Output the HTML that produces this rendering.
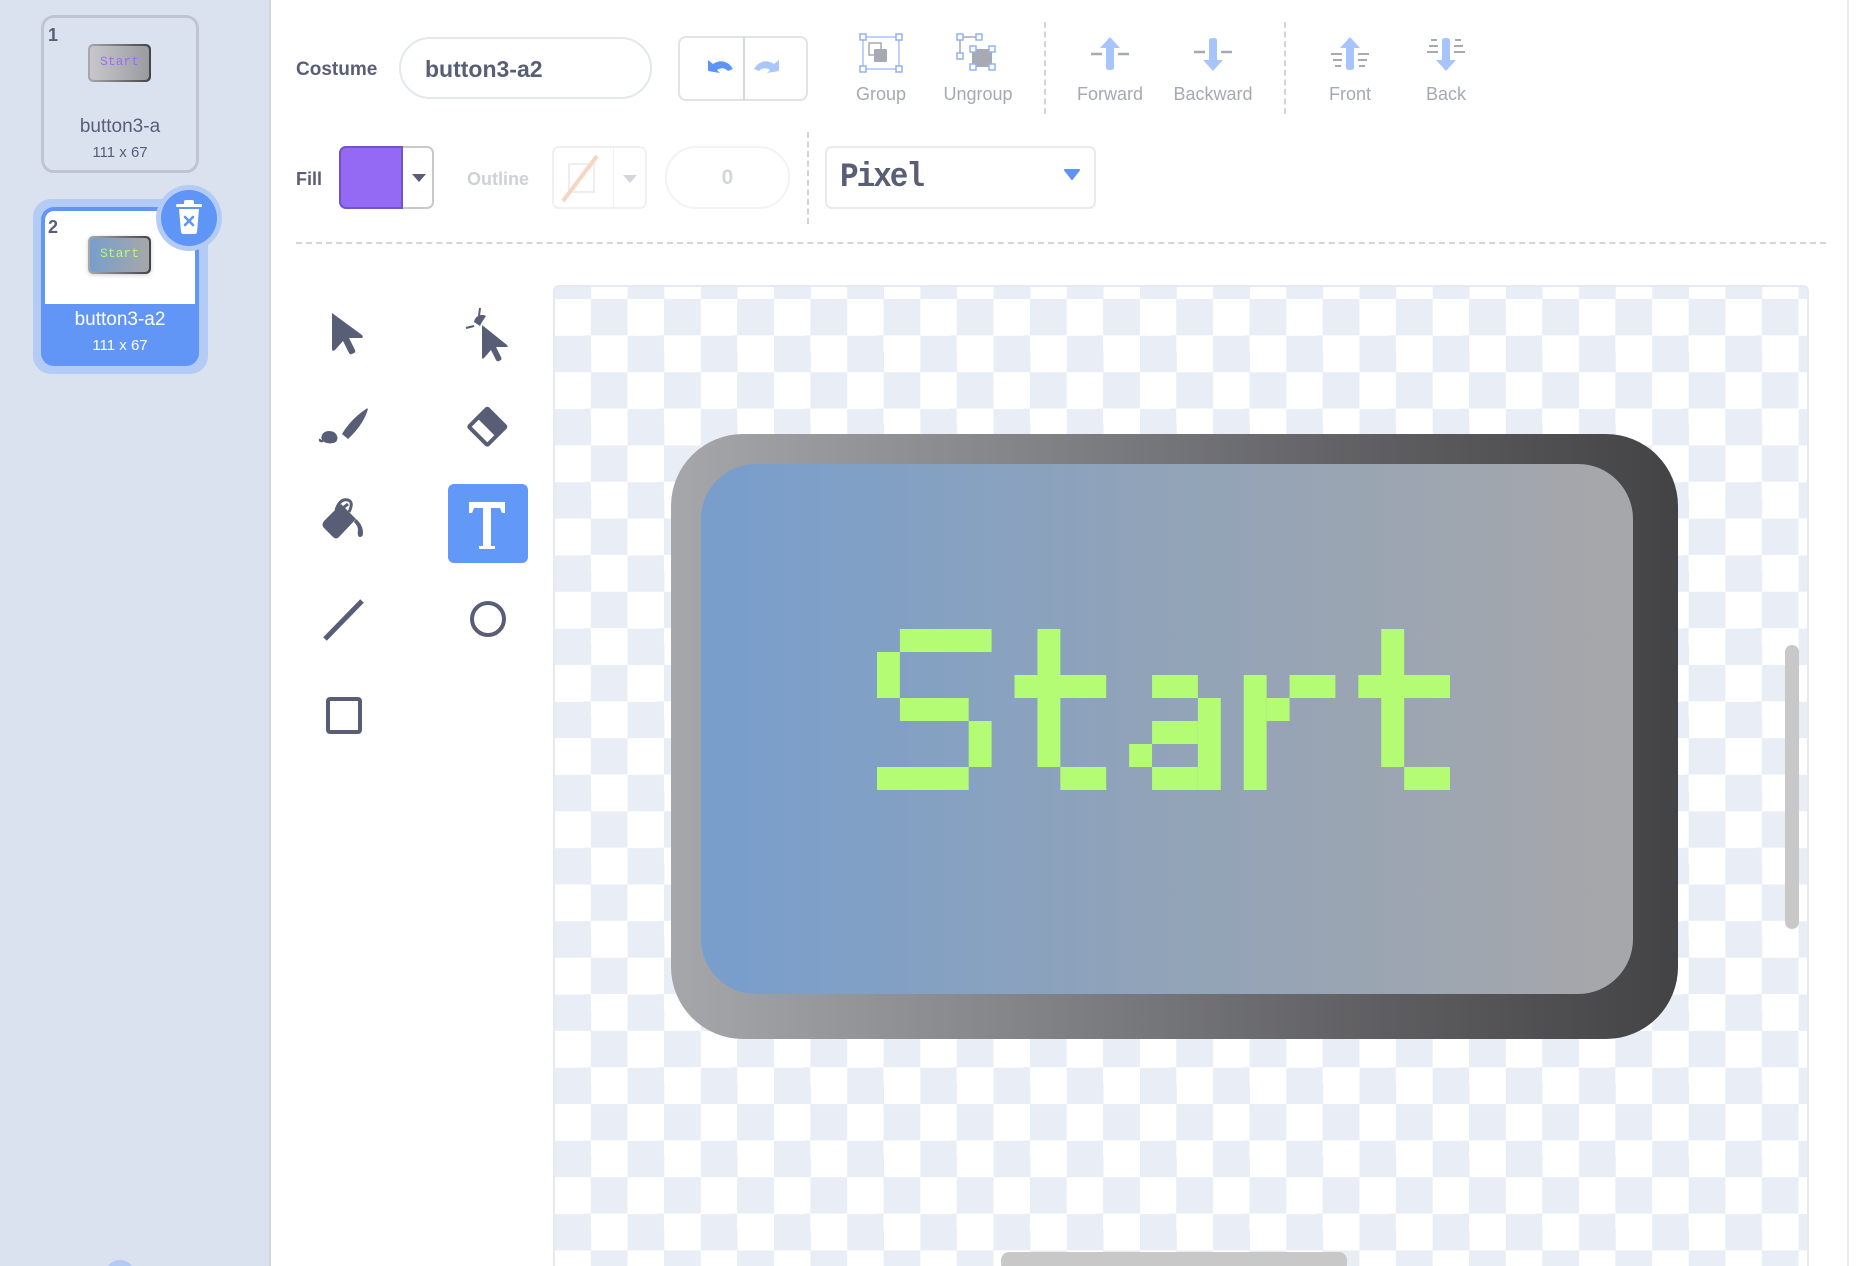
<!DOCTYPE html>
<html><head><meta charset="utf-8">
<style>
*{margin:0;padding:0;box-sizing:border-box}
html,body{width:1856px;height:1266px;overflow:hidden}
body{background:#fff;font-family:"Liberation Sans",Arial,sans-serif;color:#575e75}
#w{position:relative;width:1856px;height:1266px;overflow:hidden}
.a{position:absolute}
.side{left:0;top:0;width:271px;height:1266px;background:#dbe2ef;border-right:2px solid #cfd6e2}
.card{border-radius:13px}
.lbl{font-size:18px;color:#a6a9b3;text-align:center;width:120px}
.dash{border-left:2px dashed #d0d3da}
.canvas{left:553px;top:285px;width:1256px;height:990px;border:2px solid #e6eaf0;border-radius:6px;
background-color:#fff;background-image:repeating-conic-gradient(#e9eef6 0 25%,#fff 0 50%);background-size:73.2px 73.2px;background-position:-0.6px 12px}
</style></head><body><div id="w">
<div class="a side"></div>
<!-- card 1 -->
<div class="a card" style="left:41px;top:15px;width:158px;height:158px;border:3px solid #bfc5d0;background:#dbe2ef"></div>
<div class="a" style="left:48px;top:25px;font-size:18px;font-weight:bold;color:#575e75">1</div>
<div class="a" style="left:88px;top:44px;width:63px;height:38px;border-radius:5px;background:linear-gradient(90deg,#a8a9ad,#444447);padding:2px"><div style="width:100%;height:100%;border-radius:4px;background:linear-gradient(90deg,#c8c8cc,#9a9ba0);font-family:'Liberation Mono',monospace;font-size:13px;color:#9a6cf7;text-align:center;line-height:31px">Start</div></div>
<div class="a" style="left:41px;top:116px;width:158px;text-align:center;font-size:19px;color:#575e75">button3-a</div>
<div class="a" style="left:41px;top:144px;width:158px;text-align:center;font-size:15px;color:#575e75">111 x 67</div>
<!-- card 2 -->
<div class="a" style="left:33px;top:199px;width:175px;height:175px;border-radius:18px;background:#b3cbf5"></div>
<div class="a card" style="left:41px;top:207px;width:158px;height:159px;background:#6196f7;overflow:hidden"><div style="height:93px;background:#fff;margin:4px 4px 0 4px;border-radius:9px 9px 0 0"></div></div>
<div class="a" style="left:48px;top:217px;font-size:18px;font-weight:bold;color:#575e75">2</div>
<div class="a" style="left:88px;top:236px;width:63px;height:38px;border-radius:5px;background:linear-gradient(90deg,#a8a9ad,#444447);padding:2px;box-shadow:0 1px 4px rgba(0,0,0,.2)"><div style="width:100%;height:100%;border-radius:4px;background:linear-gradient(90deg,#789ecd,#a7a7aa);font-family:'Liberation Mono',monospace;font-size:13px;color:#b3fc74;text-align:center;line-height:31px">Start</div></div>
<div class="a" style="left:41px;top:309px;width:158px;text-align:center;font-size:19px;color:#fff">button3-a2</div>
<div class="a" style="left:41px;top:337px;width:158px;text-align:center;font-size:15px;color:#fff">111 x 67</div>
<div class="a" style="left:156px;top:185px;width:66px;height:66px;border-radius:50%;background:#b3cbf5"></div>
<div class="a" style="left:161px;top:190px;width:56px;height:56px;border-radius:50%;background:#5f95f7"></div>
<svg class="a" style="left:170px;top:198px" width="38" height="40" viewBox="0 0 38 40"><rect x="6" y="6" width="26" height="3" rx="1.5" fill="#fff"/><rect x="14" y="2" width="10" height="5" rx="2" fill="#fff"/><path d="M9 11h20l-2 23q-.3 2-2.3 2H13.3q-2 0-2.3-2z" fill="#fff"/><path d="M15 19l8 8M23 19l-8 8" stroke="#5f95f7" stroke-width="2.6" stroke-linecap="round"/></svg>
<div class="a" style="left:105px;top:1260px;width:30px;height:30px;border-radius:50%;background:#b3cbf5"></div>

<!-- toolbar row 1 -->
<div class="a" style="left:296px;top:59px;font-size:19px;font-weight:bold">Costume</div>
<div class="a" style="left:399px;top:37px;width:253px;height:62px;border:2px solid #e3e7ee;border-radius:31px;font-size:23px;font-weight:bold;padding:17px 0 0 24px">button3-a2</div>
<div class="a" style="left:678px;top:36px;width:130px;height:65px;border:2px solid #e0e3e8;border-radius:8px"></div>
<div class="a" style="left:743px;top:37px;width:2px;height:63px;background:#d5d8dd"></div>
<svg class="a" style="left:678px;top:36px" width="130" height="65"><path d="M30 35V24l5 4q9-6 17 1l3 4-5 2q-5-5-11-1l3 3z" fill="#5e94f6"/><path d="M101 35V24l-5 4q-9-6-17 1l-3 4 5 2q5-5 11-1l-3 3z" fill="#aac7fa"/></svg>
<!-- group icon -->
<svg class="a" style="left:859px;top:33px" width="44" height="42"><rect x="4" y="4" width="36" height="32" fill="none" stroke="#a8c4f8" stroke-width="1.5"/><rect x="10" y="10" width="12" height="12" fill="none" stroke="#a7a9b3" stroke-width="1.5"/><rect x="15" y="16" width="13" height="13" rx="1" fill="#a7a9b3"/><g fill="#fff" stroke="#8fb2f7" stroke-width="1.5"><rect x="1" y="1" width="6" height="6"/><rect x="37" y="1" width="6" height="6"/><rect x="1" y="33" width="6" height="6"/><rect x="37" y="33" width="6" height="6"/></g></svg>
<div class="a lbl" style="left:821px;top:84px">Group</div>
<svg class="a" style="left:956px;top:33px" width="44" height="42"><path d="M5 4h18M4 5v18" stroke="#a7a9b3" stroke-width="1.5"/><rect x="16" y="16" width="20" height="18" fill="#a7a9b3"/><g fill="#fff" stroke="#8fb2f7" stroke-width="1.5"><rect x="1" y="1" width="6" height="6"/><rect x="20" y="1" width="6" height="6"/><rect x="1" y="20" width="6" height="6"/><rect x="14" y="13" width="6" height="6"/><rect x="33" y="13" width="6" height="6"/><rect x="14" y="31" width="6" height="6"/><rect x="33" y="31" width="6" height="6"/></g></svg>
<div class="a lbl" style="left:918px;top:84px">Ungroup</div>
<div class="a dash" style="left:1044px;top:22px;height:92px"></div>
<svg class="a" style="left:1088px;top:35px" width="44" height="38"><path d="M3 19h11M30 19h11" stroke="#a7a9b3" stroke-width="2.5"/><path d="M22 2l-10 11h6v20q0 2 4 2t4-2V13h6z" fill="#a8c5fb"/></svg>
<div class="a lbl" style="left:1050px;top:84px">Forward</div>
<svg class="a" style="left:1191px;top:35px" width="44" height="38"><path d="M3 17h11M30 17h11" stroke="#a7a9b3" stroke-width="2.5"/><path d="M22 36l-10-11h6V5q0-2 4-2t4 2v20h6z" fill="#a8c5fb"/></svg>
<div class="a lbl" style="left:1153px;top:84px">Backward</div>
<div class="a dash" style="left:1284px;top:22px;height:92px"></div>
<svg class="a" style="left:1328px;top:35px" width="44" height="38"><path d="M3 19h11M30 19h11M5 25h9M30 25h9M7 31h6M31 31h6" stroke="#a7a9b3" stroke-width="2"/><path d="M22 2l-10 11h6v20q0 2 4 2t4-2V13h6z" fill="#a8c5fb"/></svg>
<div class="a lbl" style="left:1290px;top:84px">Front</div>
<svg class="a" style="left:1424px;top:35px" width="44" height="38"><path d="M7 5h6M31 5h6M5 11h9M30 11h9M3 17h11M30 17h11" stroke="#a7a9b3" stroke-width="2"/><path d="M22 36l-10-11h6V5q0-2 4-2t4 2v20h6z" fill="#a8c5fb"/></svg>
<div class="a lbl" style="left:1386px;top:84px">Back</div>

<!-- row 2 -->
<div class="a" style="left:296px;top:169px;font-size:18px;font-weight:bold">Fill</div>
<div class="a" style="left:339px;top:146px;width:95px;height:63px;border:2px solid #c8c9cc;border-radius:7px;background:#fff"></div>
<div class="a" style="left:339px;top:146px;width:64px;height:63px;border:2px solid #7452c9;border-radius:7px 0 0 7px;background:#9469f4"></div>
<div class="a" style="left:412px;top:174px;width:0;height:0;border-left:7px solid transparent;border-right:7px solid transparent;border-top:8px solid #575e75"></div>
<div class="a" style="left:467px;top:169px;font-size:18px;font-weight:bold;color:#cfd1d6">Outline</div>
<div class="a" style="left:552px;top:146px;width:95px;height:63px;border:2px solid #eef0f3;border-radius:7px"></div>
<div class="a" style="left:613px;top:147px;width:1px;height:61px;background:#eef0f3"></div>
<svg class="a" style="left:552px;top:146px" width="62" height="63"><rect x="17" y="18" width="25" height="28" fill="none" stroke="#e8e9ec" stroke-width="1.5"/><path d="M11 55L45 10" stroke="#f8d5c2" stroke-width="4"/></svg>
<div class="a" style="left:623px;top:175px;width:0;height:0;border-left:7px solid transparent;border-right:7px solid transparent;border-top:8px solid #d4d6db"></div>
<div class="a" style="left:665px;top:146px;width:125px;height:63px;border:2px solid #f2f3f5;border-radius:31px;text-align:center;font-size:21px;font-weight:bold;color:#d4d6db;padding-top:18px">0</div>
<div class="a dash" style="left:807px;top:132px;height:92px"></div>
<div class="a" style="left:825px;top:146px;width:271px;height:63px;border:2px solid #e7eaef;border-radius:7px"></div>
<div class="a" style="left:840px;top:160px;font-family:'Liberation Mono',monospace;font-size:31px;font-weight:bold;color:#575e75;letter-spacing:-2px;transform:scaleY(1.1)">Pixel</div>
<svg class="a" style="left:1064px;top:169px" width="16" height="12"><path d="M1 1h14l-7 9z" fill="#5e94f6" stroke="#5e94f6" stroke-linejoin="round" stroke-width="2"/></svg>
<div class="a" style="left:296px;top:242px;width:1530px;border-top:2px dashed #d3d5da"></div>

<!-- tools -->
<svg class="a" style="left:300px;top:290px" width="240" height="470">
<g fill="#575e75">
<path d="M32 23v36q0 3 3 1l8-9 6 12q1 2 3 1l2-1q2-1 1-3l-6-12h12q3 0 1-3z"/>
<path d="M182 35v32q0 3 2 1l7-8 5 10q1 2 3 1l2-1q1-1 0-3l-5-10h10q3 0 1-2z"/>
<path d="M174 32a8 8 0 0 1 12-6l-4 6-2 4z"/>
<path d="M180 18l-1 8M166 38l8-2" stroke="#575e75" stroke-width="2"/>
<path d="M66 119q3-2 1 3q-5 14-19 27l-6-5q9-15 24-25z"/>
<path d="M24 152q-4-3-2-7q2-4 7-4q5 0 7 3q3 4 0 8q-6 3-12 0z"/>
<path d="M23 151q-4 1-3-2" stroke="#575e75" stroke-width="2"/>
<g transform="rotate(45 188 136)"><rect x="173" y="122" width="30" height="30" rx="3"/><rect x="177" y="138" width="22" height="10" fill="#fff"/></g>
<path d="M24 231l17-17 15 15-17 18q-3 3-6 0l-9-9q-3-3 0-7z"/>
<path d="M36 220q4-12 12-10q6 2 1 12M30 228l18-14" fill="none" stroke="#575e75" stroke-width="3"/>
<path d="M56 229q7 6 7 14q0 4-3 4q-3 0-2-7q0-4-4-8z"/>
</g>
<rect x="148" y="194" width="80" height="79" rx="6" fill="#6298f8"/>
<path d="M169 212h36v11h-3l-2-5h-9v38h4v3h-16v-3h4v-38h-9l-2 5h-3z" fill="#fff"/>
<path d="M25 349l37-38" stroke="#575e75" stroke-width="5"/>
<circle cx="188" cy="329" r="16" fill="none" stroke="#575e75" stroke-width="4"/>
<rect x="28" y="409" width="32" height="33" rx="2" fill="none" stroke="#575e75" stroke-width="4"/>
</svg>

<!-- canvas -->
<div class="a canvas"></div>
<div class="a" style="left:671px;top:434px;width:1007px;height:605px;border-radius:72px;background:linear-gradient(90deg,#a6a7ab,#88898d 30%,#5f5f62 70%,#434345)"></div>
<div class="a" style="left:701px;top:464px;width:932px;height:530px;border-radius:55px;background:linear-gradient(90deg,#789ecd,#8fa3ba 45%,#a7a7aa)"></div>
<svg class="a" style="left:877px;top:628.7px" width="573" height="161" viewBox="0 0 25 7" preserveAspectRatio="none" fill="#b3fc74">
<rect x="1" y="0" width="4" height="1"/><rect x="0" y="1" width="1" height="2"/><rect x="1" y="3" width="3" height="1"/><rect x="4" y="4" width="1" height="2"/><rect x="0" y="6" width="4" height="1"/>
<rect x="7" y="0" width="1" height="6"/><rect x="6" y="2" width="4" height="1"/><rect x="8" y="6" width="2" height="1"/>
<rect x="12" y="2" width="2" height="1"/><rect x="14" y="3" width="1" height="4"/><rect x="12" y="4" width="2" height="1"/><rect x="11" y="5" width="1" height="1"/><rect x="12" y="6" width="2" height="1"/>
<rect x="16" y="2" width="1" height="5"/><rect x="17" y="3" width="1" height="1"/><rect x="18" y="2" width="2" height="1"/>
<rect x="22" y="0" width="1" height="6"/><rect x="21" y="2" width="4" height="1"/><rect x="23" y="6" width="2" height="1"/>
</svg>
<div class="a" style="left:1785px;top:645px;width:14px;height:284px;border-radius:7px;background:#c8c8c8"></div>
<div class="a" style="left:1001px;top:1252px;width:346px;height:20px;border-radius:8px;background:#c8c8c8"></div>
<div class="a" style="left:1847px;top:0;width:2px;height:1266px;background:#e8ebf0"></div>
</div></body></html>
